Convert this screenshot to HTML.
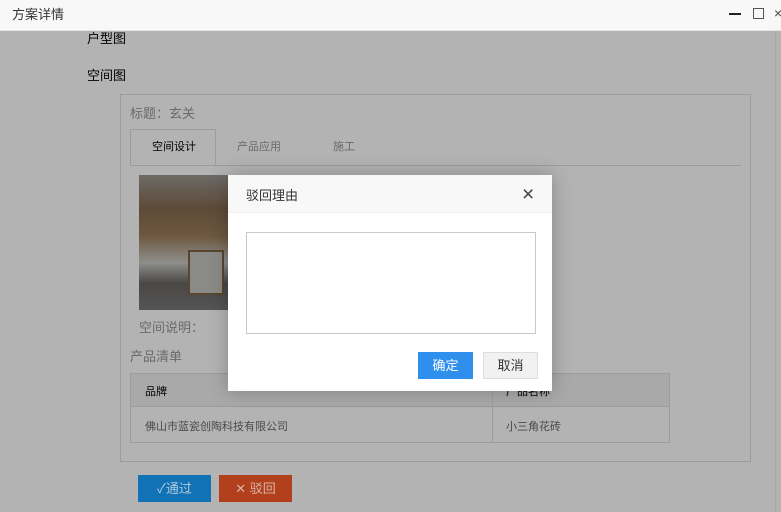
<!DOCTYPE html>
<html><head><meta charset="utf-8"><style>
*{margin:0;padding:0;box-sizing:border-box}
body{width:781px;height:512px;overflow:hidden;background:#b3b3b3;font-family:"Liberation Sans","Noto Sans CJK SC",sans-serif;position:relative;font-size:12px;color:#000}
.a{position:absolute}
.hdr{left:0;top:0;width:781px;height:31px;background:#f8f8f8;border-bottom:1px solid #e4e4e4}
.t{white-space:nowrap}
.bx{border:1px solid #9c9c9c}
</style></head><body>
<div class="a hdr"><div class="a t" style="left:12px;top:4px;font-size:13px;color:#333">方案详情</div>
<div class="a" style="left:729px;top:13px;width:12px;height:2px;background:#222"></div>
<div class="a" style="left:753px;top:8px;width:11px;height:11px;border:1px solid #555"></div>
<div class="a t" style="left:774px;top:5px;font-size:14px;color:#444">×</div>
</div>
<div class="a" style="left:775px;top:31px;width:1px;height:481px;background:#a8a8a8"></div>
<div class="a t" style="left:87px;top:28px;font-size:13px">户型图</div>
<div class="a t" style="left:87px;top:65px;font-size:13px">空间图</div>
<div class="a bx" style="left:120px;top:94px;width:631px;height:368px"></div>
<div class="a t" style="left:130px;top:103px;font-size:13px;color:#6a6a6a">标题：玄关</div>
<div class="a" style="left:130px;top:129px;width:86px;height:37px;border:1px solid #9c9c9c;border-bottom:none"></div>
<div class="a" style="left:130px;top:165px;width:611px;height:1px;background:#9c9c9c"></div>
<div class="a t" style="left:152px;top:138px;font-size:11px">空间设计</div>
<div class="a t" style="left:237px;top:138px;font-size:11px;color:#6a6a6a">产品应用</div>
<div class="a t" style="left:333px;top:138px;font-size:11px;color:#6a6a6a">施工</div>
<div class="a" style="left:139px;top:175px;width:89px;height:135px;background:linear-gradient(180deg,#6d6a66 0%,#5e4a38 25%,#6e5840 45%,#8e8e8c 65%,#4a4846 80%,#555 100%)"></div>
<div class="a" style="left:188px;top:250px;width:36px;height:45px;background:#8a8a86;border:2px solid #5a4630"></div>
<div class="a t" style="left:139px;top:317px;font-size:13px;color:#6a6a6a">空间说明：</div>
<div class="a t" style="left:130px;top:346px;font-size:13px;color:#6a6a6a">产品清单</div>
<div class="a bx" style="left:130px;top:373px;width:540px;height:70px"></div>
<div class="a" style="left:131px;top:374px;width:538px;height:33px;background:#a9a9a9;border-bottom:1px solid #9c9c9c"></div>
<div class="a" style="left:492px;top:373px;width:1px;height:70px;background:#9c9c9c"></div>
<div class="a t" style="left:145px;top:383px;font-size:11px">品牌</div>
<div class="a t" style="left:506px;top:383px;font-size:11px">产品名称</div>
<div class="a t" style="left:145px;top:418px;font-size:11px;color:#4a4a4a">佛山市蓝瓷创陶科技有限公司</div>
<div class="a t" style="left:506px;top:418px;font-size:11px;color:#4a4a4a">小三角花砖</div>
<div class="a t" style="left:138px;top:475px;width:73px;height:27px;background:#1272b6;color:#b3c9da;font-size:13px;line-height:27px;text-align:center">✓通过</div>
<div class="a t" style="left:219px;top:475px;width:73px;height:27px;background:#b2401d;color:#d8b5aa;font-size:13px;line-height:27px;text-align:center">✕ 驳回</div>

<div class="a" style="left:228px;top:175px;width:324px;height:216px;background:#fff;box-shadow:0 0 18px rgba(0,0,0,.25)">
<div class="a" style="left:0;top:0;width:324px;height:38px;background:#f8f8f8;border-bottom:1px solid #eee"></div>
<div class="a t" style="left:18px;top:10px;font-size:13px;color:#333">驳回理由</div>
<div class="a t" style="left:294px;top:8px;font-size:21px;color:#444;line-height:24px">×</div>
<div class="a" style="left:18px;top:57px;width:290px;height:102px;border:1px solid #c8c8c8"></div>
<div class="a t" style="left:190px;top:177px;width:55px;height:27px;background:#2f8fec;color:#fff;font-size:13px;line-height:27px;text-align:center">确定</div>
<div class="a t" style="left:255px;top:177px;width:55px;height:27px;background:#f1f1f1;border:1px solid #ddd;color:#333;font-size:13px;line-height:25px;text-align:center">取消</div>
</div>
</body></html>
